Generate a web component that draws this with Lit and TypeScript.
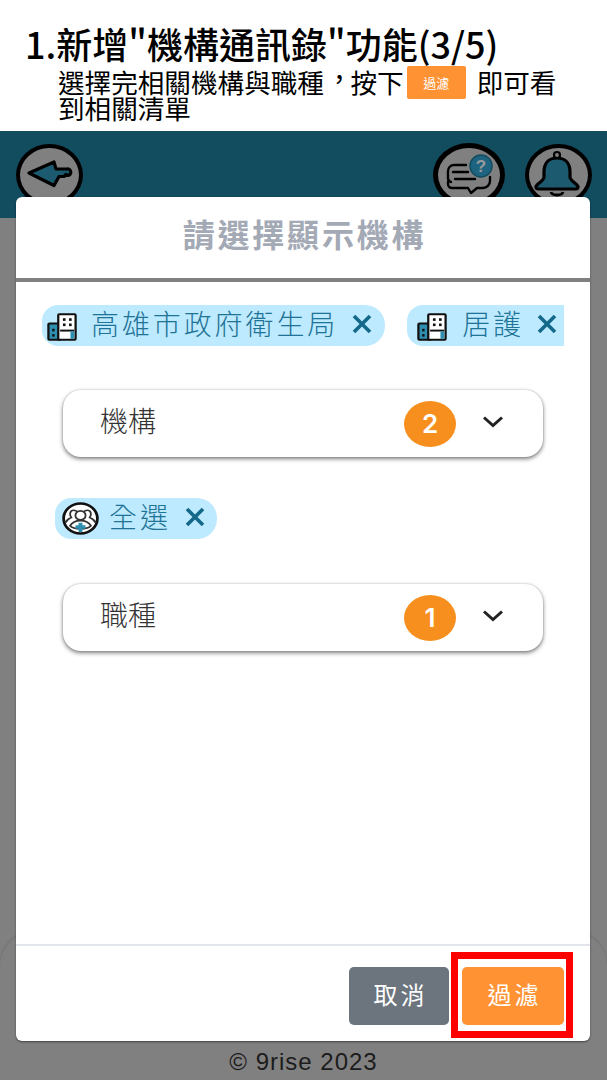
import { LitElement, css, html, svg } from 'lit';
import { customElement } from 'lit/decorators.js';

const building = svg`
  <rect x="1.5" y="12" width="13" height="18.5" rx="1" fill="#2f8fb0" stroke="#111" stroke-width="2.4"/>
  <rect x="12" y="1.5" width="18.5" height="29" rx="1" fill="#fff" stroke="#111" stroke-width="2.4"/>
  <rect x="5.5" y="18" width="2.6" height="3" fill="#111"/>
  <rect x="5.5" y="24" width="2.6" height="3" fill="#111"/>
  <rect x="17" y="6" width="2.8" height="3" fill="#111"/>
  <rect x="23.5" y="6" width="2.8" height="3" fill="#111"/>
  <rect x="17" y="12" width="2.8" height="3" fill="#111"/>
  <rect x="23.5" y="12" width="2.8" height="3" fill="#111"/>
  <rect x="14" y="19" width="15" height="2.2" fill="#111"/>
  <rect x="25" y="21" width="4" height="8.5" fill="#2f8fb0"/>
`;

const staff = svg`
  <circle cx="16" cy="16" r="14.6" fill="#fff" stroke="#111" stroke-width="2.4"/>
  <path d="M3 20c1-3 3-4 5-5-2-3-1-7 2-7 2 0 3 1 4 2M29 20c-1-3-3-4-5-5 2-3 1-7-2-7-2 0-3 1-4 2" fill="none" stroke="#333" stroke-width="1.6"/>
  <circle cx="16" cy="13" r="4.4" fill="#fff" stroke="#333" stroke-width="1.6"/>
  <path d="M7 23c2-4 5-5 9-5s7 1 9 5c-3 4-15 4-18 0z" fill="#fff" stroke="#333" stroke-width="1.6"/>
  <path d="M14.3 20h3.4v2.6h2.6V26h-2.6v3h-3.4v-3h-2.6v-3.4h2.6z" fill="#2f8fb0"/>
`;

@customElement('app-chip')
export class AppChip extends LitElement {
  static properties = {
    label: { type: String },
    kind: { type: String },
  };

  declare label: string;
  declare kind: string;

  static styles = css`
    :host {
      display: block;
      flex: none;
    }

    .chip {
      display: flex;
      align-items: center;
      height: 41px;
      box-sizing: border-box;
      padding: 0 var(--chip-right, 12px) 0 var(--chip-left, 5px);
      background: #bdeaff;
      border-radius: 16px var(--chip-end-radius, 20px) var(--chip-end-radius, 20px) 16px;
      color: #1f7396;
      font-size: 28px;
      line-height: 30px;
      font-weight: 300;
      letter-spacing: 2.9px;
      white-space: nowrap;
    }

    .icon {
      width: 30px;
      height: 28px;
      flex: none;
      margin: 3px var(--icon-gap, 14px) 0 0;
    }

    .icon.staff {
      width: 37px;
      height: 33px;
      margin: 0 10px 0 0;
    }

    .text {
      margin-bottom: 6px;
    }

    .close {
      width: 20px;
      height: 20px;
      flex: none;
      margin: 0 0 4px var(--close-gap, 14px);
    }
  `;

  render() {
    const isStaff = this.kind === 'staff';
    return html`
      <div class="chip">
        <svg class="icon ${isStaff ? 'staff' : ''}" viewBox="0 0 32 32" preserveAspectRatio="none">
          ${isStaff ? staff : building}
        </svg>
        <span class="text">${this.label}</span>
        <svg class="close" viewBox="0 0 20 20">
          <path d="M2 2l16 16M18 2L2 18" stroke="#14688a" stroke-width="3.6" fill="none" />
        </svg>
      </div>
    `;
  }
}

@customElement('app-select')
export class AppSelect extends LitElement {
  static properties = {
    label: { type: String },
    count: { type: Number },
  };

  declare label: string;
  declare count: number;

  static styles = css`
    :host {
      display: block;
    }

    .select {
      display: flex;
      align-items: center;
      height: 67px;
      padding: 0 38px 0 37px;
      background: #fff;
      border-radius: 18px;
      box-shadow: 0 2px 4px rgba(0, 0, 0, 0.5), 0 0 2px rgba(0, 0, 0, 0.2);
      color: #333;
      font-size: 28px;
      line-height: 32px;
      font-weight: 300;
    }

    .label {
      flex: 1;
      margin-bottom: 8px;
    }

    .badge {
      display: flex;
      align-items: center;
      justify-content: center;
      width: 52px;
      height: 46px;
      margin-right: 25px;
      border-radius: 50%;
      background: #f78f1e;
      color: #fff;
      font-family: 'Inter', sans-serif;
      font-size: 26px;
      font-weight: 600;
    }

    .chevron {
      width: 24px;
      height: 14px;
      margin-bottom: 4px;
    }
  `;

  render() {
    return html`
      <div class="select">
        <span class="label">${this.label}</span>
        <span class="badge">${this.count}</span>
        <svg class="chevron" viewBox="0 0 24 14">
          <path d="M3 2.5l9 8 9-8" stroke="#222" stroke-width="3" fill="none" />
        </svg>
      </div>
    `;
  }
}

@customElement('app-root')
export class AppRoot extends LitElement {
  static styles = css`
    :host {
      display: block;
      position: relative;
      width: 607px;
      height: 1080px;
      overflow: hidden;
      background: #808080;
      font-family: 'Noto Sans CJK TC', 'Liberation Sans', sans-serif;
    }

    .caption {
      box-sizing: border-box;
      height: 131px;
      padding: 20px 0 0 25px;
      background: #fff;
      color: #000;
    }

    .caption h1 {
      margin: 0;
      height: 49px;
      font-size: 36px;
      line-height: 47px;
      font-weight: 500;
      white-space: nowrap;
    }

    .caption p {
      margin: 0;
      padding-left: 33px;
      font-size: 26.6px;
      line-height: 26px;
      font-weight: 400;
      white-space: nowrap;
    }

    .comma {
      display: inline-block;
      transform: translate(2px, -4px);
    }

    .inline-btn {
      display: inline-flex;
      align-items: center;
      justify-content: center;
      width: 59px;
      height: 33px;
      margin: -15px 5px -9px 3px;
      border-radius: 2px;
      background: #ff9233;
      color: #fff;
      font-size: 13px;
      line-height: 16px;
      font-weight: 400;
      vertical-align: middle;
    }

    .topbar {
      display: flex;
      align-items: flex-start;
      gap: 20px;
      height: 87px;
      padding: 13px 15px 0 16px;
      box-sizing: border-box;
      background: #124c5f;
    }

    .round {
      box-sizing: border-box;
      width: 67px;
      height: 62px;
      flex: none;
      border: 4px solid #000;
      border-radius: 50%;
      background: #808080;
    }

    .round svg {
      display: block;
      width: 100%;
      height: 100%;
    }

    .round.help {
      width: 72px;
      height: 64px;
      margin: -1px 0 0 auto;
      border-width: 5px;
    }

    .sheet {
      position: absolute;
      left: 0;
      right: 0;
      top: 932px;
      bottom: 0;
      border-radius: 34px 34px 0 0;
      background: #808080;
      box-shadow: 0 -1px 3px rgba(0, 0, 0, 0.14);
      display: flex;
      align-items: flex-end;
      justify-content: center;
    }

    .copyright {
      margin-bottom: 5px;
      font-family: 'Liberation Sans', sans-serif;
      font-size: 24px;
      line-height: 26px;
      letter-spacing: 1px;
      color: #1c1c1c;
    }

    .modal {
      position: absolute;
      left: 16px;
      top: 197px;
      width: 574px;
      height: 844px;
      display: flex;
      flex-direction: column;
      background: #fff;
      border-radius: 6px;
      box-shadow: 0 1px 2px rgba(0, 0, 0, 0.5);
    }

    .modal-title {
      height: 85px;
      box-sizing: border-box;
      padding: 13px 0 0 3px;
      border-bottom: 4px solid #808080;
      text-align: center;
      color: #a3a9b5;
      font-size: 32px;
      line-height: 46px;
      font-weight: 700;
      letter-spacing: 2.8px;
      flex: none;
    }

    .modal-body {
      flex: 1;
      padding-top: 23px;
    }

    .chips {
      display: flex;
      gap: 22px;
      margin: 0 26px 0 26px;
    }

    .chips .first {
      --chip-right: 13px;
    }

    .chips .second {
      --chip-left: 10px;
      --chip-right: 7px;
      --chip-end-radius: 0;
      --icon-gap: 15px;
      --close-gap: 13px;
    }

    .chips.single {
      --chip-left: 7px;
      margin: 41px 0 0 39px;
    }

    app-select {
      margin: 44px 47px 0;
    }

    app-select.lower {
      margin-top: 45px;
    }

    .modal-footer {
      flex: none;
      display: flex;
      justify-content: flex-end;
      gap: 13px;
      height: 97px;
      box-sizing: border-box;
      padding: 21px 26px 0 0;
      border-top: 2px solid #e2e5ec;
    }

    .btn {
      width: 100px;
      height: 58px;
      border: none;
      border-radius: 5px;
      color: #fff;
      font-family: inherit;
      font-size: 24px;
      line-height: 30px;
      letter-spacing: 3px;
      padding: 0 0 5px 3px;
    }

    .btn.cancel {
      background: #6c757d;
    }

    .btn.confirm {
      width: 102px;
      background: #ff9233;
    }

    .highlight {
      position: absolute;
      left: 451px;
      top: 952px;
      width: 122px;
      height: 86px;
      box-sizing: border-box;
      border: 7px solid #f00;
      pointer-events: none;
    }
  `;

  render() {
    return html`
      <section class="caption" lang="zh-TW">
        <h1>1.新增"機構通訊錄"功能(3/5)</h1>
        <p>選擇完相關機構與職種<span class="comma">，</span>按下<span class="inline-btn">過濾</span> 即可看<br />到相關清單</p>
      </section>

      <header class="topbar">
        <div class="round">
          <svg viewBox="0 0 59 54" preserveAspectRatio="none">
            <path
              d="M9 25L34 14l2 7h11a3.2 3.2 0 0 1 1 6.5l-2-1-2 2h-5l-5 9z"
              fill="#1c5a70"
              stroke="#000"
              stroke-width="3.2"
              stroke-linejoin="round"
            />
          </svg>
        </div>
        <div class="round help">
          <svg viewBox="0 0 62 54" preserveAspectRatio="none">
            <path
              d="M28 17H16a6 6 0 0 0-6 6v7a4 4 0 0 0 3 4M15 24h15M17 31h20"
              fill="none"
              stroke="#000"
              stroke-width="2.4"
              stroke-linecap="round"
            />
            <path
              d="M10 34v2a4 4 0 0 0 4 4h16l3 5 6-5h6a7 7 0 0 0 7-7v-4"
              fill="none"
              stroke="#000"
              stroke-width="2.4"
              stroke-linecap="round"
              stroke-linejoin="round"
            />
            <circle cx="43" cy="18" r="11" fill="#1e6480" stroke="#124c5f" stroke-width="1.5" />
            <text x="43" y="24" text-anchor="middle" font-size="17" font-weight="700" fill="#9a9a9a" font-family="Liberation Sans">?</text>
          </svg>
        </div>
        <div class="round">
          <svg viewBox="0 0 59 54" preserveAspectRatio="none">
            <path
              d="M28 10c-9 0-13 6-13 14v5c0 3-4 5-7 8-2 2-1 4 1 4h38c2 0 3-2 1-4-3-3-7-5-7-8v-5c0-8-4-14-13-14z"
              fill="#1c5a70"
              stroke="#000"
              stroke-width="3.2"
            />
            <circle cx="28" cy="7" r="3" fill="#808080" stroke="#000" stroke-width="2.2" />
            <path d="M22 44c1 4 11 4 12 0" fill="none" stroke="#000" stroke-width="2.8" />
          </svg>
        </div>
      </header>

      <div class="sheet">
        <span class="copyright">© 9rise 2023</span>
      </div>

      <div class="modal">
        <div class="modal-title">請選擇顯示機構</div>
        <div class="modal-body">
          <div class="chips">
            <app-chip class="first" label="高雄市政府衛生局"></app-chip>
            <app-chip class="second" label="居護"></app-chip>
          </div>
          <app-select label="機構" count="2"></app-select>
          <div class="chips single">
            <app-chip label="全選" kind="staff"></app-chip>
          </div>
          <app-select class="lower" label="職種" count="1"></app-select>
        </div>
        <div class="modal-footer">
          <button class="btn cancel">取消</button>
          <button class="btn confirm">過濾</button>
        </div>
      </div>

      <div class="highlight"></div>
    `;
  }
}
